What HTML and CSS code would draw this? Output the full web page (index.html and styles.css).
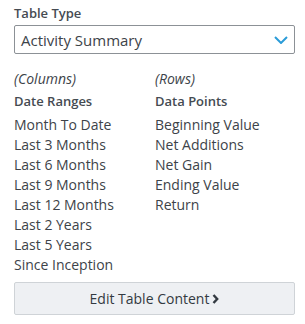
FILE: index.html
```html
<!DOCTYPE html>
<html lang="en">
<head>
  <meta charset="UTF-8" />
  <title>Table Type</title>
  <link rel="stylesheet" href="styles.css">
</head>
<body>
  <div class="panel">
    <div class="field-label">Table Type</div>
    <div class="select-box">
      <span>Activity Summary</span>
      <svg class="select-arrow" width="14" height="8" viewBox="0 0 14 8">
        <path d="M1 1 L7 7 L13 1" fill="none" stroke="#2b9cd8" stroke-width="2"/>
      </svg>
    </div>

    <div class="columns">
      <div class="col">
        <div class="hint">(Columns)</div>
        <div class="col-title">Date Ranges</div>
        <ul class="items">
          <li>Month To Date</li>
          <li>Last 3 Months</li>
          <li>Last 6 Months</li>
          <li>Last 9 Months</li>
          <li>Last 12 Months</li>
          <li>Last 2 Years</li>
          <li>Last 5 Years</li>
          <li>Since Inception</li>
        </ul>
      </div>
      <div class="col">
        <div class="hint">(Rows)</div>
        <div class="col-title">Data Points</div>
        <ul class="items">
          <li>Beginning Value</li>
          <li>Net Additions</li>
          <li>Net Gain</li>
          <li>Ending Value</li>
          <li>Return</li>
        </ul>
      </div>
    </div>

    <button class="edit-btn">Edit Table Content
      <svg width="7" height="10" viewBox="0 0 7 10">
        <path d="M1.5 1 L5.2 5 L1.5 9" fill="none" stroke="#333a41" stroke-width="2.4"/>
      </svg>
    </button>
  </div>
</body>
</html>
```

FILE: styles.css
```css
* {
  box-sizing: border-box;
}

body {
  margin: 0;
  font-family: 'Open Sans', sans-serif;
  background: #fff;
  color: #3d4349;
}

.panel {
  padding: 5px 10px 0 14px;
}

.field-label {
  font-size: 13px;
  font-weight: 600;
  line-height: 16px;
  color: #454b52;
}

.select-box {
  margin-top: 4px;
  height: 29px;
  border: 1px solid #8c9196;
  border-radius: 2px;
  display: flex;
  align-items: center;
  justify-content: space-between;
  padding: 0 5px 0 6px;
  font-size: 15px;
}

.select-arrow {
  margin-right: 1px;
}

.columns {
  display: grid;
  grid-template-columns: 141px 1fr;
  margin-top: 14px;
}

.hint {
  font-style: italic;
  font-size: 14px;
  line-height: 22px;
}

.col-title {
  font-size: 13px;
  font-weight: 600;
  line-height: 22px;
  color: #454b52;
}

.items {
  list-style: none;
  margin: 3px 0 0;
  padding: 0;
  font-size: 14px;
  line-height: 20px;
}

.edit-btn {
  display: flex;
  align-items: center;
  justify-content: center;
  gap: 3px;
  width: 100%;
  height: 33px;
  margin-top: 7px;
  background: #eef0f3;
  border: 1px solid #cfd3d7;
  border-radius: 2px;
  font-family: 'Open Sans', sans-serif;
  font-size: 14px;
  font-weight: 500;
  color: #333a41;
}
```
